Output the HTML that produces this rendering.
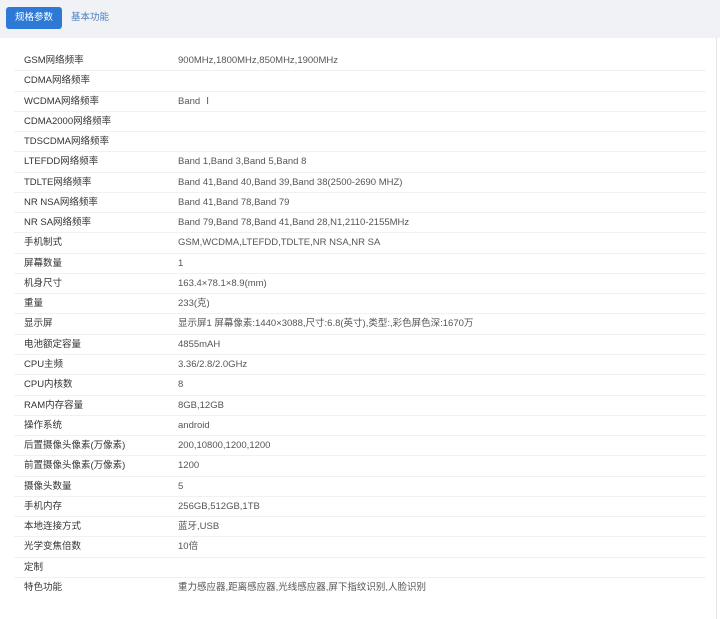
<!DOCTYPE html>
<html><head><meta charset="utf-8"><style>
body{margin:0;width:720px;height:619px;background:#fff;font-family:"Liberation Sans","Noto Sans CJK SC",sans-serif;overflow:hidden;position:relative}
.top{position:absolute;left:0;top:0;width:720px;height:38px;background:#f0f2f5}
.btn{position:absolute;left:6px;top:7px;width:56px;height:22px;background:#2d7ad6;border-radius:3px;color:#fff;font-size:9.5px;line-height:22px;text-align:center}
.tab2{position:absolute;left:71px;top:7px;line-height:22px;font-size:9.5px;color:#4a7fc1}
.vline{position:absolute;left:716px;top:38px;width:1px;height:581px;background:#e3e5e8}
.rows{position:absolute;left:14px;top:51px;width:692px}
.r{height:20.27px;box-sizing:border-box;border-bottom:1px solid #f0f1f3;position:relative;font-size:9.5px;line-height:20px}
.l{position:absolute;left:10px;color:#333}
.v{position:absolute;left:164px;color:#555}
</style></head><body>
<div class="top"><div class="btn">规格参数</div><div class="tab2">基本功能</div></div>
<div class="vline"></div>
<div class="rows">
<div class="r"><span class="l">GSM网络频率</span><span class="v">900MHz,1800MHz,850MHz,1900MHz</span></div>
<div class="r"><span class="l">CDMA网络频率</span></div>
<div class="r"><span class="l">WCDMA网络频率</span><span class="v">Band Ⅰ</span></div>
<div class="r"><span class="l">CDMA2000网络频率</span></div>
<div class="r"><span class="l">TDSCDMA网络频率</span></div>
<div class="r"><span class="l">LTEFDD网络频率</span><span class="v">Band 1,Band 3,Band 5,Band 8</span></div>
<div class="r"><span class="l">TDLTE网络频率</span><span class="v">Band 41,Band 40,Band 39,Band 38(2500-2690 MHZ)</span></div>
<div class="r"><span class="l">NR NSA网络频率</span><span class="v">Band 41,Band 78,Band 79</span></div>
<div class="r"><span class="l">NR SA网络频率</span><span class="v">Band 79,Band 78,Band 41,Band 28,N1,2110-2155MHz</span></div>
<div class="r"><span class="l">手机制式</span><span class="v">GSM,WCDMA,LTEFDD,TDLTE,NR NSA,NR SA</span></div>
<div class="r"><span class="l">屏幕数量</span><span class="v">1</span></div>
<div class="r"><span class="l">机身尺寸</span><span class="v">163.4×78.1×8.9(mm)</span></div>
<div class="r"><span class="l">重量</span><span class="v">233(克)</span></div>
<div class="r"><span class="l">显示屏</span><span class="v">显示屏1 屏幕像素:1440×3088,尺寸:6.8(英寸),类型:,彩色屏色深:1670万</span></div>
<div class="r"><span class="l">电池额定容量</span><span class="v">4855mAH</span></div>
<div class="r"><span class="l">CPU主频</span><span class="v">3.36/2.8/2.0GHz</span></div>
<div class="r"><span class="l">CPU内核数</span><span class="v">8</span></div>
<div class="r"><span class="l">RAM内存容量</span><span class="v">8GB,12GB</span></div>
<div class="r"><span class="l">操作系统</span><span class="v">android</span></div>
<div class="r"><span class="l">后置摄像头像素(万像素)</span><span class="v">200,10800,1200,1200</span></div>
<div class="r"><span class="l">前置摄像头像素(万像素)</span><span class="v">1200</span></div>
<div class="r"><span class="l">摄像头数量</span><span class="v">5</span></div>
<div class="r"><span class="l">手机内存</span><span class="v">256GB,512GB,1TB</span></div>
<div class="r"><span class="l">本地连接方式</span><span class="v">蓝牙,USB</span></div>
<div class="r"><span class="l">光学变焦倍数</span><span class="v">10倍</span></div>
<div class="r"><span class="l">定制</span></div>
<div class="r" style="border-bottom:none"><span class="l">特色功能</span><span class="v">重力感应器,距离感应器,光线感应器,屏下指纹识别,人脸识别</span></div>
</div>
</body></html>
